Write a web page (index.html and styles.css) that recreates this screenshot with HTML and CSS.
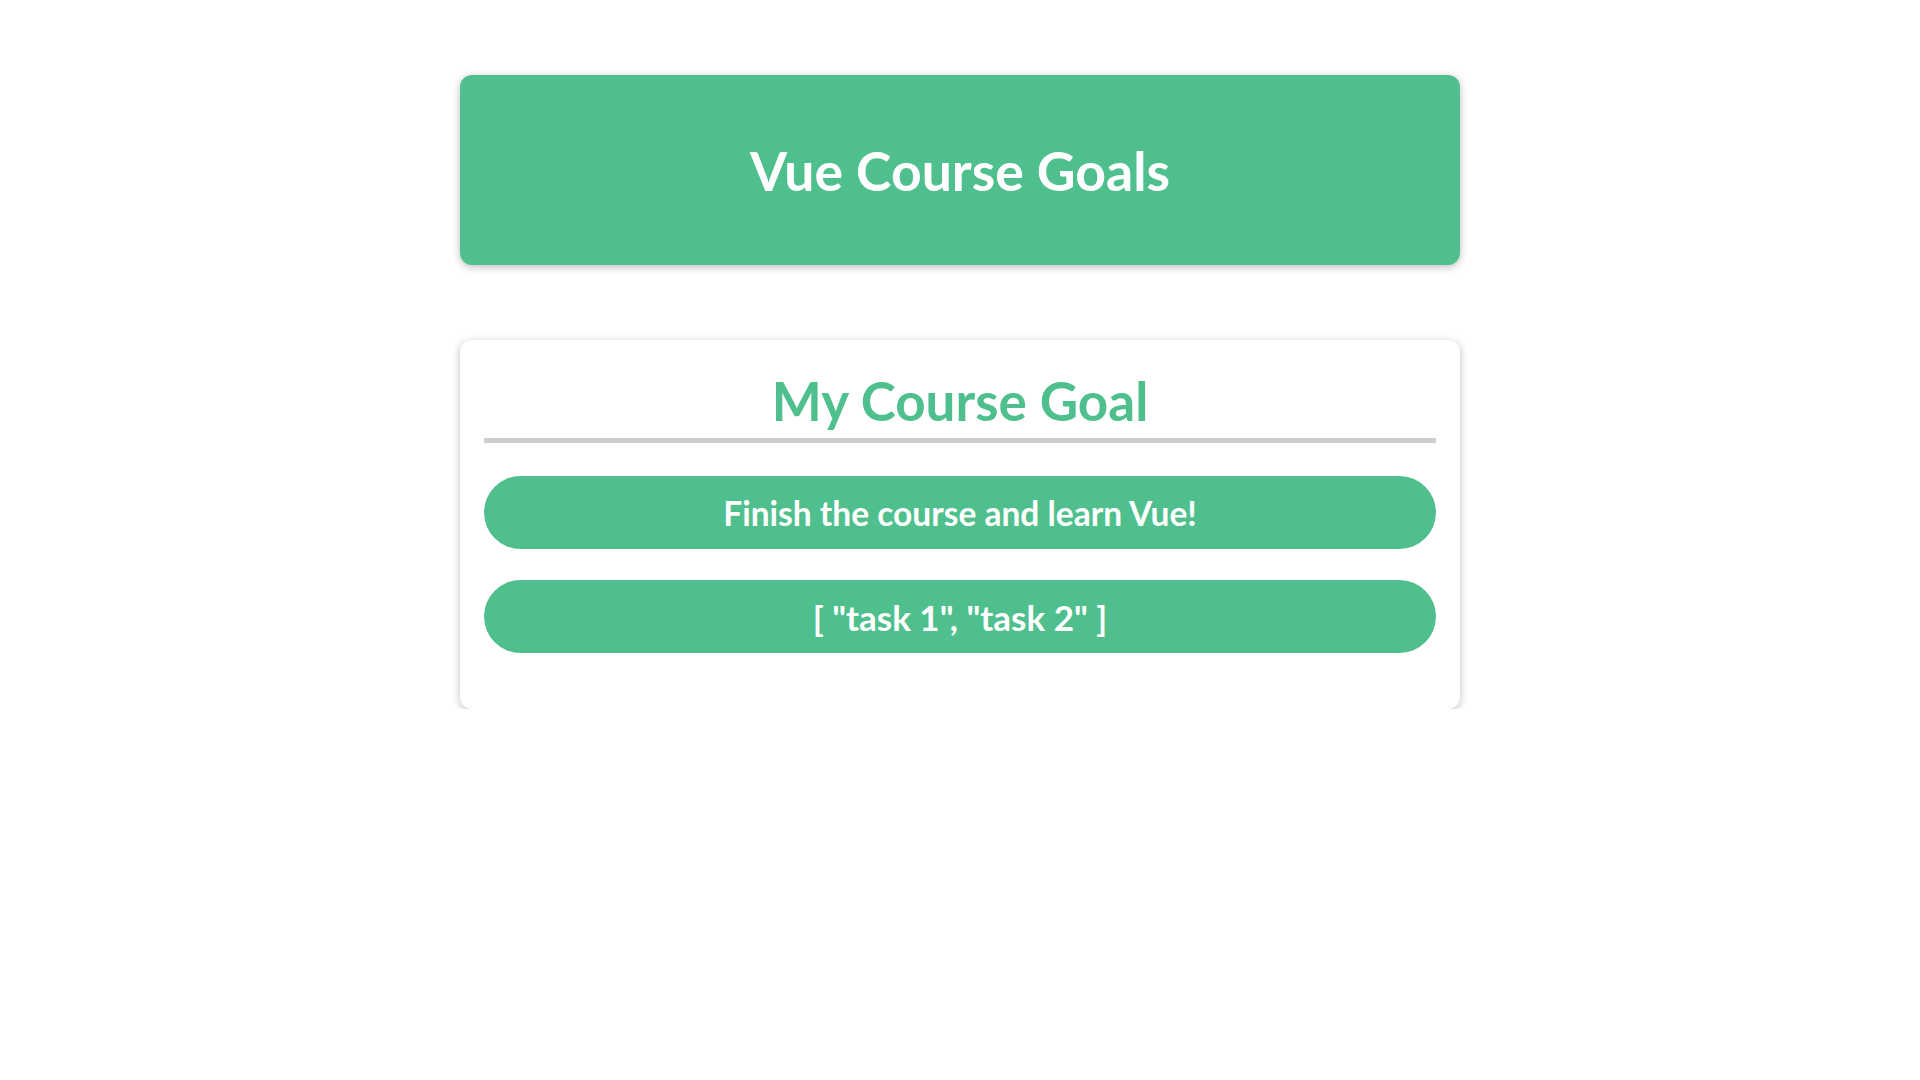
FILE: index.html
```html
<!DOCTYPE html>
<html lang="en">
<head>
<meta charset="utf-8">
<title>Vue Course Goals</title>
<link rel="stylesheet" href="styles.css">
</head>
<body>
  <header class="app-header">
    <h1 class="app-title">Vue Course Goals</h1>
  </header>
  <section class="goal-card">
    <h2 class="goal-title">My Course Goal</h2>
    <ul class="goal-list">
      <li class="goal-item">Finish the course and learn Vue!</li>
      <li class="goal-item goal-item--data">[ "task 1", "task 2" ]</li>
    </ul>
  </section>
</body>
</html>
```

FILE: styles.css
```css
* {
  box-sizing: border-box;
}

html {
  font-family: "Lato", "Open Sans", sans-serif;
}

body {
  margin: 0;
  background: #ffffff;
}

.app-header {
  width: 1000px;
  height: 190px;
  margin: 75px auto 0;
  display: flex;
  align-items: center;
  justify-content: center;
  background: #4fc08d;
  color: #ffffff;
  border-radius: 12px;
  box-shadow: 0 2px 8px rgba(0, 0, 0, 0.26);
}

.app-title {
  margin: 0;
  font-size: 53.5px;
  font-weight: 700;
  line-height: 1.2;
}

.goal-card {
  width: 1000px;
  margin: 75px auto 0;
  padding: 24px 24px 24px;
  background: #ffffff;
  border-radius: 12px;
  box-shadow: 0 2px 8px rgba(0, 0, 0, 0.26);
}

.goal-title {
  margin: 0;
  text-align: center;
  color: #4fc08d;
  font-size: 53px;
  font-weight: 700;
  line-height: 74px;
  border-bottom: 5px solid #cccccc;
}

.goal-list {
  list-style: none;
  margin: 33px 0 32px;
  padding: 0;
  display: flex;
  flex-direction: column;
  gap: 31px;
}

.goal-item {
  height: 73px;
  display: flex;
  align-items: center;
  justify-content: center;
  background: #4fc08d;
  color: #ffffff;
  border-radius: 37px;
  font-size: 33.5px;
  font-weight: 700;
}

.goal-item--data {
  font-size: 35px;
}
```
